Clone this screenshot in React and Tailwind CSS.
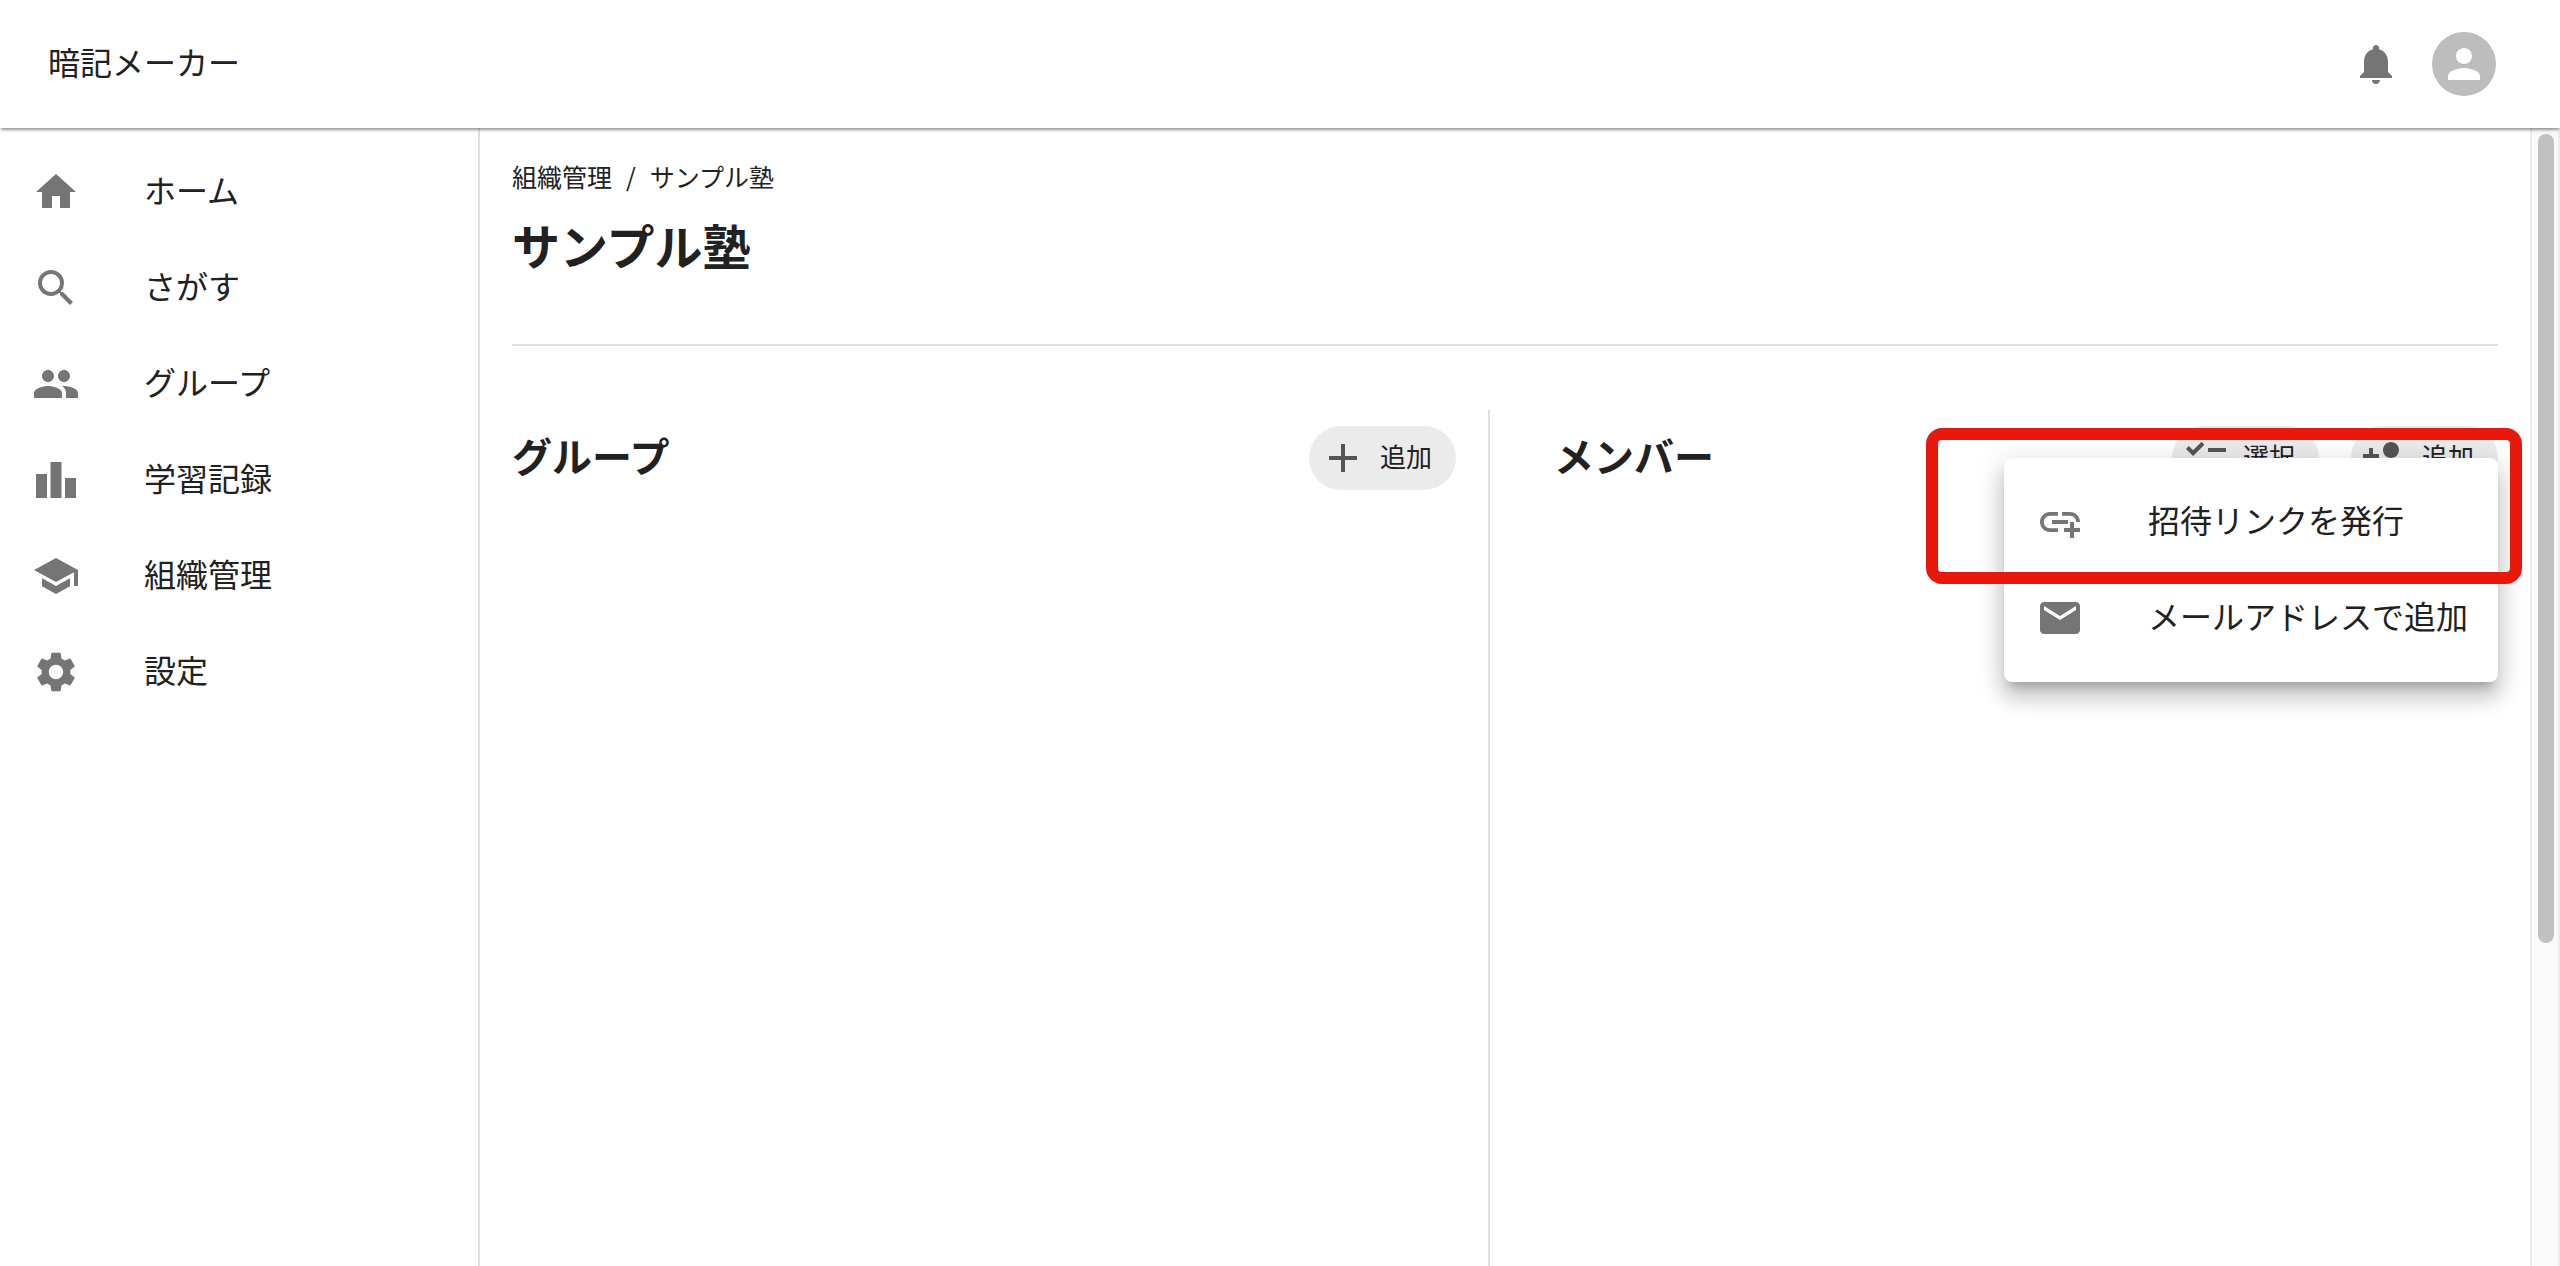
import React, { useState } from 'react';
import {
  MdAdd,
  MdAddLink,
  MdChecklist,
  MdHome,
  MdLeaderboard,
  MdMail,
  MdNotifications,
  MdPeople,
  MdPerson,
  MdPersonAdd,
  MdSchool,
  MdSearch,
  MdSettings,
} from 'react-icons/md';

const navItems = [
  { id: 'home', label: 'ホーム', icon: MdHome },
  { id: 'search', label: 'さがす', icon: MdSearch },
  { id: 'groups', label: 'グループ', icon: MdPeople },
  { id: 'records', label: '学習記録', icon: MdLeaderboard },
  { id: 'organizations', label: '組織管理', icon: MdSchool },
  { id: 'settings', label: '設定', icon: MdSettings },
];

const Header = () => (
  <header className="relative z-10 flex h-32 shrink-0 items-center justify-between bg-white pl-12 pr-16 shadow-[0_4px_2px_-2px_rgba(0,0,0,0.2),0_2px_2px_0_rgba(0,0,0,0.14),0_2px_6px_0_rgba(0,0,0,0.12)]">
    <a href="#" className="pb-1.5 text-[32px] leading-12">暗記メーカー</a>
    <div className="flex items-center gap-8">
      <button aria-label="通知">
        <MdNotifications className="size-12 text-[#757575]" />
      </button>
      <button aria-label="アカウント" className="flex size-16 items-center justify-center rounded-full bg-[#bdbdbd]">
        <MdPerson className="size-12 text-white" />
      </button>
    </div>
  </header>
);

const Sidebar = () => (
  <nav className="w-[480px] shrink-0 border-r-2 border-[#e0e0e0] py-4">
    {navItems.map(({ id, label, icon: Icon }) => (
      <a key={id} href={`#${id}`} className="flex h-24 items-center gap-16 px-8">
        <Icon className="size-12 text-[#757575]" />
        <span className="pb-1.5 text-[32px] leading-12">{label}</span>
      </a>
    ))}
  </nav>
);

const ChipButton = ({ icon: Icon, label, onClick }) => (
  <button onClick={onClick} className="flex h-16 items-center gap-[13px] rounded-full bg-[#ebebeb] pl-[10px] pr-6">
    <Icon className="size-12 text-[#555555]" />
    <span className="pb-1 text-[26px] leading-10">{label}</span>
  </button>
);

const MenuItem = ({ icon: Icon, label }) => (
  <button className="flex h-24 w-full items-center gap-16 pl-8">
    <Icon className="size-12 shrink-0 text-[#757575]" />
    <span className="whitespace-nowrap pb-1.5 text-[32px] leading-12">{label}</span>
  </button>
);

const AddMemberMenu = () => (
  <div className="absolute right-0 top-8 w-[494px] rounded-lg bg-white py-4 shadow-[0_10px_10px_-6px_rgba(0,0,0,0.2),0_16px_20px_2px_rgba(0,0,0,0.14),0_6px_28px_4px_rgba(0,0,0,0.12)]">
    <MenuItem icon={MdAddLink} label="招待リンクを発行" />
    <MenuItem icon={MdMail} label="メールアドレスで追加" />
    {/* Highlight around the invite link item */}
    <div className="pointer-events-none absolute -left-[78px] -right-6 -top-[30px] h-[156px] rounded-2xl border-[12px] border-[#e8180c]" />
  </div>
);

const App = () => {
  const [menuOpen, setMenuOpen] = useState(true);

  return (
    <div className="flex h-screen flex-col overflow-hidden bg-white font-['Noto_Sans_CJK_JP',sans-serif] text-[#212121]">
      <Header />
      <div className="flex min-h-0 flex-1">
        <Sidebar />

        <main className="flex min-w-0 flex-1 flex-col px-8 pt-7">
          <div className="flex items-center gap-3.5 text-[25px] leading-10">
            <a href="#organizations">組織管理</a>
            <span>/</span>
            <span>サンプル塾</span>
          </div>
          <h1 className="mt-4 text-5xl leading-16 font-bold">サンプル塾</h1>
          <hr className="mt-[68px] border-t-2 border-[#e0e0e0]" />

          <div className="mt-16 flex flex-1">
            <section className="flex-1 pt-4">
              <div className="flex items-center justify-between">
                <h2 className="pb-1.5 text-[40px] leading-14 font-bold">グループ</h2>
                <ChipButton icon={MdAdd} label="追加" />
              </div>
            </section>
            <div className="ml-8 mr-16 w-[2px] bg-[#e0e0e0]" />
            <section className="flex-1 pt-4">
              <div className="relative flex items-center justify-between">
                <h2 className="pb-1.5 text-[40px] leading-14 font-bold">メンバー</h2>
                <div className="flex gap-8">
                  <ChipButton icon={MdChecklist} label="選択" />
                  <ChipButton icon={MdPersonAdd} label="追加" onClick={() => setMenuOpen(!menuOpen)} />
                </div>
                {menuOpen && <AddMemberMenu />}
              </div>
            </section>
          </div>
        </main>

        {/* Scrollbar */}
        <div className="w-[30px] shrink-0 border-x-2 border-[#ececec] bg-[#fafafa] px-[6px] pt-[6px]">
          <div className="h-5/7 w-4 rounded-full bg-[#c1c1c1]" />
        </div>
      </div>
    </div>
  );
};

export default App;
